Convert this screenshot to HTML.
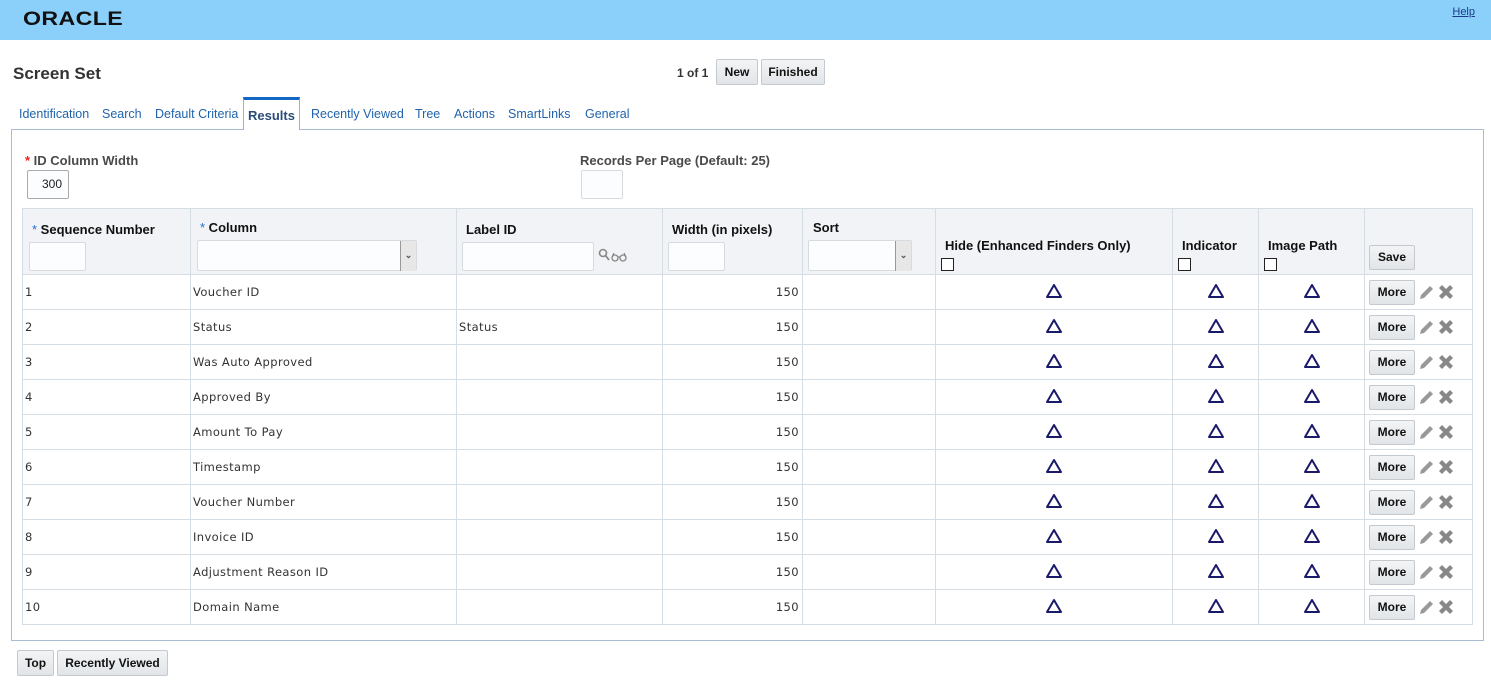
<!DOCTYPE html>
<html><head><style>
body{margin:0;width:1491px;height:688px;background:#fff;font-family:"Liberation Sans",Arial,sans-serif;position:relative;overflow:hidden}
.hdr{position:absolute;left:0;top:0;width:1491px;height:40px;background:#8bd0fb}
.logo{position:absolute;left:23px;top:9px;font-size:19px;font-weight:bold;letter-spacing:0.3px;color:#111;transform:scaleX(1.22);transform-origin:left}
.help{position:absolute;right:16px;top:6px;font-size:11px;color:#1a3a8a;text-decoration:underline}
.a{position:absolute}
h1{position:absolute;left:13px;top:64px;margin:0;font-size:17px;color:#333;font-weight:bold}
.btn{position:absolute;background:linear-gradient(#f2f4f5,#e2e5e8);border:1px solid #c3c9cf;border-radius:2px;font-size:12px;font-weight:bold;color:#111;text-align:center;box-sizing:border-box}
.tabs{position:absolute;top:107px;font-size:12.5px;color:#1f63ad}
.sel{position:absolute;left:243px;top:97px;width:57px;height:33px;border:1px solid #9db0c4;border-top:3px solid #1266c5;border-bottom:none;background:#fff;box-sizing:border-box;font-weight:bold;color:#2a4d7a;font-size:13px;text-align:center;padding-top:8px;z-index:2}
.panel{position:absolute;left:11px;top:129px;width:1473px;height:512px;border:1px solid #a8bdd2;box-sizing:border-box}
.lbl{position:absolute;font-size:13px;font-weight:bold;color:#4a4a4a}
.inp{position:absolute;border:1px solid #d6dbe0;background:#fcfdfe;border-radius:2px;box-sizing:border-box}
table{position:absolute;left:22px;top:208px;border-collapse:collapse;table-layout:fixed}
td,th{border:1px solid #d5dde5;padding:0;box-sizing:border-box}
th{background:#f1f3f6;height:66px;vertical-align:top;text-align:left;font-size:13px;color:#111;position:relative}
td{height:35px;font-family:"DejaVu Sans",Verdana,sans-serif;font-size:11.5px;letter-spacing:0.4px;color:#333;padding-left:2px}
.star{color:#2b6cd6;font-weight:normal}
.cb{position:absolute;width:11px;height:11px;border:1px solid #222;background:#fff}
.tri{text-align:center;padding:0}
.dd{position:absolute;width:16px;height:30px;right:0;top:0;background:#e7e7e7;border-left:1px solid #999;box-sizing:border-box;font-size:9px;text-align:center;line-height:28px;color:#555}
</style></head><body>
<div class="hdr"><div class="logo">ORACLE</div><div class="help">Help</div></div>
<h1>Screen Set</h1>
<div class="a" style="left:677px;top:66px;font-size:12px;font-weight:bold;color:#333">1 of 1</div>
<div class="btn" style="left:716px;top:59px;width:42px;height:26px;line-height:24px">New</div>
<div class="btn" style="left:761px;top:59px;width:64px;height:26px;line-height:24px">Finished</div>
<div class="tabs" style="left:19px">Identification</div>
<div class="tabs" style="left:102px">Search</div>
<div class="tabs" style="left:155px">Default Criteria</div>
<div class="sel">Results</div>
<div class="tabs" style="left:311px">Recently Viewed</div>
<div class="tabs" style="left:415px">Tree</div>
<div class="tabs" style="left:454px">Actions</div>
<div class="tabs" style="left:508px">SmartLinks</div>
<div class="tabs" style="left:585px">General</div>
<div class="panel"></div>
<div class="lbl" style="left:25px;top:153px"><span style="color:#e22">*</span> ID Column Width</div>
<div class="inp" style="left:27px;top:170px;width:42px;height:29px;border-color:#aaa;font-size:12px;text-align:right;padding:6px 6px 0 0;color:#222">300</div>
<div class="lbl" style="left:580px;top:153px">Records Per Page (Default: 25)</div>
<div class="inp" style="left:581px;top:170px;width:42px;height:29px"></div>
<table>
<colgroup><col style="width:168px"><col style="width:266px"><col style="width:206px"><col style="width:140px"><col style="width:133px"><col style="width:237px"><col style="width:86px"><col style="width:106px"><col style="width:108px"></colgroup>
<tr>
<th><div class="a" style="left:9px;top:13px"><span class="star">*</span> Sequence Number</div><div class="inp" style="left:6px;top:33px;width:57px;height:29px"></div></th>
<th><div class="a" style="left:9px;top:11px"><span class="star">*</span> Column</div><div class="inp" style="left:6px;top:31px;width:220px;height:31px"><div class="dd">&#8964;</div></div></th>
<th><div class="a" style="left:9px;top:13px">Label ID</div><div class="inp" style="left:5px;top:33px;width:132px;height:29px"></div>
<svg class="a" style="left:141px;top:39px" width="34" height="16"><circle cx="5" cy="5" r="3.5" fill="none" stroke="#888" stroke-width="1.6"/><line x1="7.5" y1="7.5" x2="11" y2="12" stroke="#888" stroke-width="1.8"/><circle cx="17" cy="10" r="3" fill="none" stroke="#888" stroke-width="1.3"/><circle cx="25" cy="10" r="3" fill="none" stroke="#888" stroke-width="1.3"/><path d="M14 9 L16 5 M28 9 L26 5 M20 9 h2" stroke="#888" stroke-width="1.2" fill="none"/></svg></th>
<th><div class="a" style="left:9px;top:13px">Width (in pixels)</div><div class="inp" style="left:5px;top:33px;width:57px;height:29px"></div></th>
<th><div class="a" style="left:10px;top:11px">Sort</div><div class="inp" style="left:5px;top:31px;width:104px;height:31px"><div class="dd">&#8964;</div></div></th>
<th><div class="a" style="left:9px;top:29px">Hide (Enhanced Finders Only)</div><div class="cb" style="left:5px;top:49px"></div></th>
<th><div class="a" style="left:9px;top:29px">Indicator</div><div class="cb" style="left:5px;top:49px"></div></th>
<th><div class="a" style="left:9px;top:29px">Image Path</div><div class="cb" style="left:5px;top:49px"></div></th>
<th><div class="btn" style="left:4px;top:36px;width:46px;height:25px;line-height:23px">Save</div></th>
</tr>
</table>
<div id="more"></div>
<script>
var names=["Voucher ID","Status","Was Auto Approved","Approved By","Amount To Pay","Timestamp","Voucher Number","Invoice ID","Adjustment Reason ID","Domain Name"];
var tri='<svg width="18" height="16"><path d="M9 2 L16 14 H2 Z" fill="none" stroke="#1a1a6a" stroke-width="2" stroke-linejoin="round"/></svg>';
var rows='';
for(var i=0;i<10;i++){rows+='<tr><td>'+(i+1)+'</td><td>'+names[i]+'</td><td>'+(i==1?'Status':'')+'</td><td style="text-align:right;padding-right:3px">150</td><td></td><td class="tri">'+tri+'</td><td class="tri">'+tri+'</td><td class="tri">'+tri+'</td><td></td></tr>';}
document.querySelector('table').insertAdjacentHTML('beforeend',rows);
var h='';for(var i=0;i<10;i++){var y=280+i*35;h+='<div class="btn" style="left:1369px;top:'+y+'px;width:46px;height:25px;line-height:23px">More</div><svg class="a" style="left:1418px;top:'+(y+3)+'px" width="36" height="18"><path d="M2 16 L3 12 L12 3 L15 6 L6 15 Z" fill="#999"/><path d="M21 5 L24 2 L28 6 L32 2 L35 5 L31 9 L35 13 L32 16 L28 12 L24 16 L21 13 L25 9 Z" fill="#888"/></svg>';}
document.getElementById('more').innerHTML=h;
</script>
<div class="btn" style="left:17px;top:650px;width:37px;height:26px;line-height:24px">Top</div>
<div class="btn" style="left:57px;top:650px;width:111px;height:26px;line-height:24px">Recently Viewed</div>
</body></html>
